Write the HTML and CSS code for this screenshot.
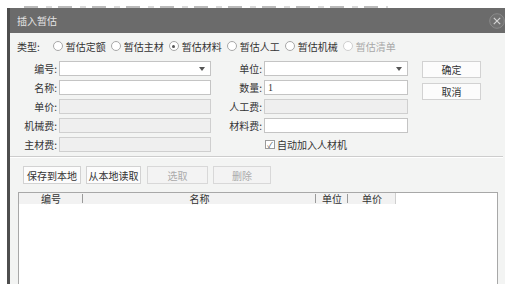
FILE: index.html
```html
<!DOCTYPE html>
<html lang="zh-CN">
<head>
  <meta charset="UTF-8" />
  <title>插入暂估</title>
  <link rel="stylesheet" href="styles.css">
</head>
<body>
  <div class="behind"></div>
  <div class="dialog">
    <div class="titlebar">
      <span class="title">插入暂估</span>
      <span class="close">
        <svg width="16" height="16" viewBox="0 0 16 16">
          <circle cx="8" cy="8" r="7.3" fill="#717171" stroke="#8a8a8a" stroke-width="1" />
          <path d="M4.8 4.8 L11.2 11.2 M11.2 4.8 L4.8 11.2" stroke="#d4d4d4" stroke-width="1.2" />
        </svg>
      </span>
    </div>

    <div class="content">
      <div class="type-row">
        <span class="type-label">类型:</span>
        <span class="radio"><i></i>暂估定额</span>
        <span class="radio"><i></i>暂估主材</span>
        <span class="radio checked"><i></i>暂估材料</span>
        <span class="radio"><i></i>暂估人工</span>
        <span class="radio"><i></i>暂估机械</span>
        <span class="radio disabled"><i></i>暂估清单</span>
      </div>

      <div class="form">
        <label class="lbl">编号:</label>
        <div class="field select"><span class="arrow"></span></div>
        <label class="lbl">单位:</label>
        <div class="field select"><span class="arrow"></span></div>
        <div class="actions">
          <button class="btn">确定</button>
          <button class="btn">取消</button>
        </div>

        <label class="lbl">名称:</label>
        <div class="field"></div>
        <label class="lbl">数量:</label>
        <div class="field">1</div>

        <label class="lbl">单价:</label>
        <div class="field off"></div>
        <label class="lbl">人工费:</label>
        <div class="field off"></div>

        <label class="lbl">机械费:</label>
        <div class="field off"></div>
        <label class="lbl">材料费:</label>
        <div class="field"></div>

        <label class="lbl">主材费:</label>
        <div class="field off"></div>
        <span></span>
        <div class="check"><i>✓</i>自动加入人材机</div>
      </div>

      <div class="sep"></div>

      <div class="toolbar">
        <button class="btn tb w1">保存到本地</button>
        <button class="btn tb w2">从本地读取</button>
        <button class="btn tb w3 disabled">选取</button>
        <button class="btn tb w4 disabled">删除</button>
      </div>

      <div class="grid">
        <div class="grid-head">
          <span class="col c1">编号</span>
          <span class="col c2">名称</span>
          <span class="col c3">单位</span>
          <span class="col c4">单价</span>
        </div>
      </div>
    </div>
  </div>
</body>
</html>
```

FILE: styles.css
```css
body {
  margin: 0;
  width: 515px;
  height: 295px;
  background: #fff;
  font-family: "Noto Sans CJK SC", "Noto Sans", sans-serif;
  font-size: 10px;
  color: #333;
  overflow: hidden;
}
.behind {
  height: 8px;
  margin-left: 18px;
  width: 370px;
  background: repeating-linear-gradient(to right, transparent 0 6px, rgba(60,60,60,0.35) 6px 20px, transparent 20px 28px, rgba(60,60,60,0.2) 28px 34px) bottom / 100% 2px no-repeat;
}
.dialog {
  margin-left: 7px;
  width: 495px;
  height: 276px;
  border-left: 3px solid #4e4e4e;
  overflow: hidden;
  background: #f3f4f3;
}
.titlebar {
  height: 25px;
  background: #6b6b6b;
  display: flex;
  align-items: center;
  justify-content: space-between;
  padding-left: 7px;
}
.title {
  color: #e4e4e4;
  font-size: 10px;
}
.close {
  display: flex;
}
.content {
  padding-top: 6px;
}
.type-row {
  display: flex;
  align-items: center;
  height: 14px;
  padding-left: 7px;
}
.type-label {
  margin-right: 13px;
}
.radio {
  display: flex;
  align-items: center;
  margin-right: 5px;
}
.radio i {
  width: 8px;
  height: 8px;
  border: 1px solid #a8a8a8;
  border-radius: 50%;
  background: #fff;
  margin-right: 3px;
  position: relative;
}
.radio.checked i::after {
  content: "";
  position: absolute;
  left: 2.5px;
  top: 2.5px;
  width: 3px;
  height: 3px;
  border-radius: 50%;
  background: #555;
}
.radio.disabled {
  color: #a8a8a8;
}
.radio.disabled i {
  border-color: #cfcfcf;
}
.form {
  display: grid;
  grid-template-columns: 49px 152px 53px 144px 73px;
  grid-auto-rows: 15px;
  row-gap: 4px;
  margin-top: 8px;
}
.lbl {
  text-align: right;
  padding-right: 2px;
  line-height: 15px;
}
.field {
  box-sizing: border-box;
  border: 1px solid #c4c4c4;
  background: #fff;
  line-height: 13px;
  padding-left: 3px;
  position: relative;
  font-family: "Liberation Serif", serif;
  font-size: 10px;
}
.field.off {
  background: #efefef;
  border-color: #cfcfcf;
}
.arrow {
  position: absolute;
  right: 5px;
  top: 5px;
  border-left: 3.5px solid transparent;
  border-right: 3.5px solid transparent;
  border-top: 4px solid #555;
}
.actions {
  grid-column: 5;
  grid-row: 1 / span 5;
  display: flex;
  flex-direction: column;
  align-items: flex-end;
  gap: 5px;
}
.btn {
  box-sizing: border-box;
  height: 18px;
  padding: 0;
  border: 1px solid #d2d2d2;
  background: #fcfcfc;
  font-family: "Noto Sans CJK SC", sans-serif;
  font-size: 10px;
  color: #333;
}
.actions .btn {
  width: 59px;
  height: 17px;
}
.check {
  grid-column: 4;
  display: flex;
  align-items: center;
  padding-left: 1px;
}
.check i {
  box-sizing: border-box;
  width: 10px;
  height: 9px;
  border: 1px solid #9a9a9a;
  background: #fff;
  font-style: normal;
  font-size: 8px;
  line-height: 7px;
  text-align: center;
  color: #555;
  margin-right: 2px;
}
.sep {
  margin-top: 4px;
  height: 1px;
  width: 493px;
  background: #cdcdcd;
  border-bottom: 1px solid #fff;
}
.toolbar {
  display: flex;
  margin-top: 8px;
  padding-left: 13px;
  gap: 5px;
}
.tb.w1 { width: 58px; }
.tb.w2 { width: 55px; }
.tb.w3 { width: 61px; margin-left: 1px; }
.tb.w4 { width: 58px; }
.btn.disabled {
  background: #f3f3f3;
  border-color: #d8d8d8;
  color: #ababab;
}
.grid {
  margin-top: 8px;
  margin-left: 8px;
  width: 480px;
  height: 100px;
  box-sizing: border-box;
  border: 1px solid #a8a8a8;
  background: #fff;
}
.grid-head {
  display: flex;
  height: 11px;
  line-height: 11px;
}
.col {
  background: #f2f2f2;
  text-align: center;
  position: relative;
}
.col::after {
  content: "";
  position: absolute;
  right: 0;
  top: 1px;
  bottom: 1px;
  width: 1px;
  background: #9a9a9a;
}
.c1 { width: 64px; }
.c2 { width: 233px; }
.c3 { width: 32px; }
.c4 { width: 48px; }
.c4::after { background: #cfcfcf; top: 0; bottom: 0; }
```
